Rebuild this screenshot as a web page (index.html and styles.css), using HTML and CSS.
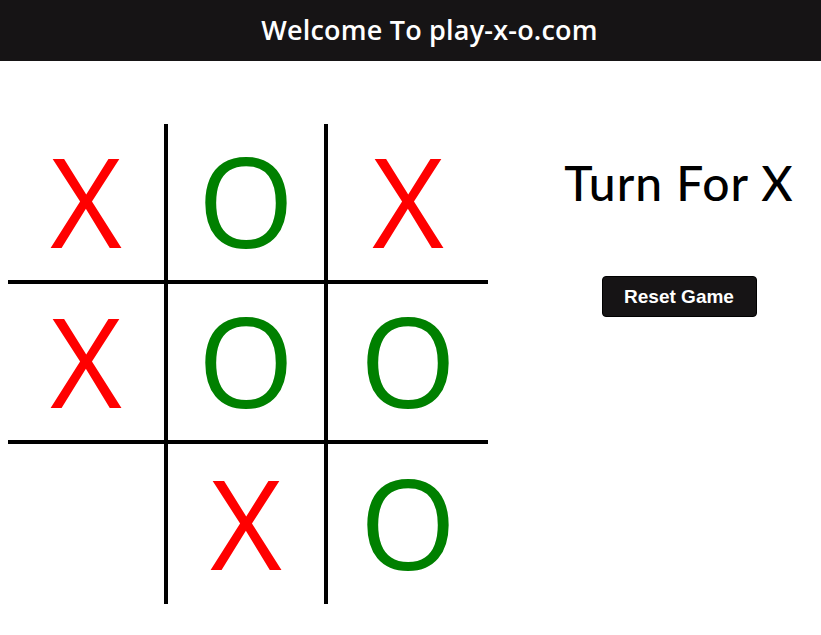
FILE: index.html
```html
<!DOCTYPE html>
<html>
<head>
<meta charset="utf-8">
<link rel="stylesheet" href="styles.css">
</head>
<body>
<header class="topbar"><h1 class="title">Welcome To play-x-o.com</h1></header>
<main class="game">
  <div class="board">
    <div class="cell x">X</div>
    <div class="cell o">O</div>
    <div class="cell x">X</div>
    <div class="cell x">X</div>
    <div class="cell o">O</div>
    <div class="cell o">O</div>
    <div class="cell"></div>
    <div class="cell x">X</div>
    <div class="cell o">O</div>
  </div>
  <section class="panel">
    <h2 class="turn">Turn For X</h2>
    <button class="reset">Reset Game</button>
  </section>
</main>
</body>
</html>
```
FILE: styles.css
```css
* { box-sizing: border-box; }
html, body { margin: 0; padding: 0; background: #fff; }
body { font-family: "Open Sans", sans-serif; }

.topbar {
  height: 61px;
  background: #161415;
  display: flex;
  align-items: center;
  justify-content: center;
  padding-left: 38px;
}
.title {
  margin: 0 0 2px 0;
  color: #fff;
  font-family: "Open Sans", sans-serif;
  font-weight: 600;
  font-size: 27px;
  letter-spacing: 0.2px;
  line-height: 1;
}

.game {
  display: flex;
  align-items: flex-start;
  padding: 63px 0 0 8px;
}
.board {
  display: grid;
  grid-template-columns: repeat(3, 160px);
  grid-template-rows: repeat(3, 160px);
}
.cell {
  display: flex;
  align-items: center;
  justify-content: center;
  font-family: "Open Sans", sans-serif;
  font-size: 124px;
  line-height: 1;
  padding-bottom: 4px;
}
.cell:nth-child(3n+1), .cell:nth-child(3n+2) { border-right: 4px solid #000; }
.cell:nth-child(-n+6) { border-bottom: 4px solid #000; }
.cell.x { color: #ff0000; }
.cell.o { color: #008000; }

.panel {
  flex: 1;
  margin-left: 49px;
  display: flex;
  flex-direction: column;
  align-items: center;
  padding-top: 31px;
}
.turn {
  margin: 0;
  font-family: "Lato", sans-serif;
  font-weight: 500;
  font-size: 48px;
  letter-spacing: 1px;
  line-height: 56px;
  color: #000;
}
.reset {
  margin-top: 65px;
  width: 155px;
  height: 41px;
  background: #161415;
  color: #fff;
  border: 1px solid #000;
  border-radius: 4px;
  font-family: "Liberation Sans", Arial, sans-serif;
  font-weight: 700;
  font-size: 19px;
  cursor: pointer;
}
```
